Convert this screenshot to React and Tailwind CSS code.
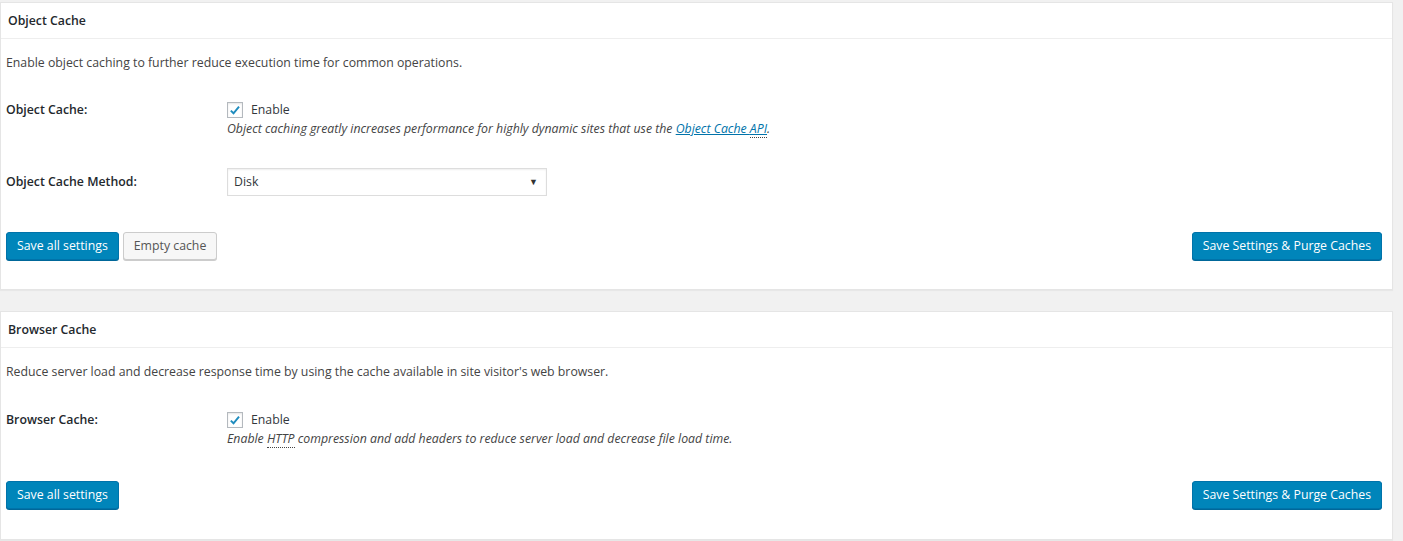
import React from "react";

const font = { fontFamily: '"Open Sans", "Noto Sans", sans-serif' };

const Check = () => (
  <span className="inline-flex items-center justify-center w-4 h-4 border border-[#b4b9be] bg-white shadow-[inset_0_1px_2px_rgba(0,0,0,0.1)] mr-[8px]">
    <svg viewBox="0 0 16 16" className="w-[15px] h-[15px]">
      <path d="M3.2 8.2 L6.3 11.2 L12.6 3.6" fill="none" stroke="#1e8cbe" strokeWidth="2.2" />
    </svg>
  </span>
);

const PrimaryBtn = ({ children }) => (
  <button className="h-[28px] px-[10px] rounded-[3px] bg-[#0085ba] border border-[#0073aa] shadow-[0_1px_0_#006799] text-white text-[12.3px] leading-[26px]">
    {children}
  </button>
);

const SecondaryBtn = ({ children }) => (
  <button className="h-[28px] px-[10px] rounded-[3px] bg-[#f7f7f7] border border-[#cccccc] shadow-[0_1px_0_#cccccc] text-[#555] text-[12.3px] leading-[26px]">
    {children}
  </button>
);

const Panel = ({ title, children }) => (
  <div className="bg-white border border-[#e5e5e5] shadow-[0_1px_1px_rgba(0,0,0,0.04)] w-[1393px]">
    <div className="h-[36px] flex items-center pt-[2px] px-[7px] border-b border-[#eeeeee]">
      <h2 className="text-[12.3px] font-semibold text-[#23282d]">{title}</h2>
    </div>
    <div className="px-[5px]">{children}</div>
  </div>
);

export default function App() {
  return (
    <div className="min-h-screen bg-[#f1f1f1] pt-[2px] text-[12.3px] text-[#444]" style={font}>
      <Panel title="Object Cache">
        <p className="pt-[14px] leading-5">
          Enable object caching to further reduce execution time for common operations.
        </p>
        <div className="flex mt-[28px]">
          <div className="w-[221px] h-[18px] flex items-center font-semibold text-[#23282d]">Object Cache:</div>
          <div>
            <div className="h-[18px] flex items-center text-[#32373c]">
              <Check />
              Enable
            </div>
            <div className="leading-[19px] italic text-[#444]">
              Object caching greatly increases performance for highly dynamic sites that use the{" "}
              <a className="text-[#0073aa] underline" href="#">
                Object Cache <abbr className="no-underline border-b border-dotted border-[#444]">API</abbr>
              </a>
              .
            </div>
          </div>
        </div>
        <div className="flex items-center mt-[30px]">
          <div className="w-[221px] font-semibold text-[#23282d]">Object Cache Method:</div>
          <div className="w-[320px] h-[28px] border border-[#dddddd] shadow-[inset_0_1px_2px_rgba(0,0,0,0.07)] flex items-center justify-between pl-[6px] pr-[8px] text-[#32373c]">
            <span>Disk</span>
            <span className="text-[9px] text-[#333]">▼</span>
          </div>
        </div>
        <div className="flex items-start justify-between mt-[36px] pb-[29px] pr-[5px]">
          <div className="flex gap-[4px]">
            <PrimaryBtn>Save all settings</PrimaryBtn>
            <SecondaryBtn>Empty cache</SecondaryBtn>
          </div>
          <PrimaryBtn>Save Settings &amp; Purge Caches</PrimaryBtn>
        </div>
      </Panel>
      <div className="h-[21px]" />
      <Panel title="Browser Cache">
        <p className="pt-[14px] leading-5">
          Reduce server load and decrease response time by using the cache available in site visitor's web browser.
        </p>
        <div className="flex mt-[29px]">
          <div className="w-[221px] h-[18px] flex items-center font-semibold text-[#23282d]">Browser Cache:</div>
          <div>
            <div className="h-[18px] flex items-center text-[#32373c]">
              <Check />
              Enable
            </div>
            <div className="leading-[19px] italic text-[#444]">
              Enable <abbr className="no-underline border-b border-dotted border-[#444]">HTTP</abbr> compression and add headers to reduce server load and decrease file load time.
            </div>
          </div>
        </div>
        <div className="flex items-start justify-between mt-[33px] pb-[30px] pr-[5px]">
          <PrimaryBtn>Save all settings</PrimaryBtn>
          <PrimaryBtn>Save Settings &amp; Purge Caches</PrimaryBtn>
        </div>
      </Panel>
    </div>
  );
}
